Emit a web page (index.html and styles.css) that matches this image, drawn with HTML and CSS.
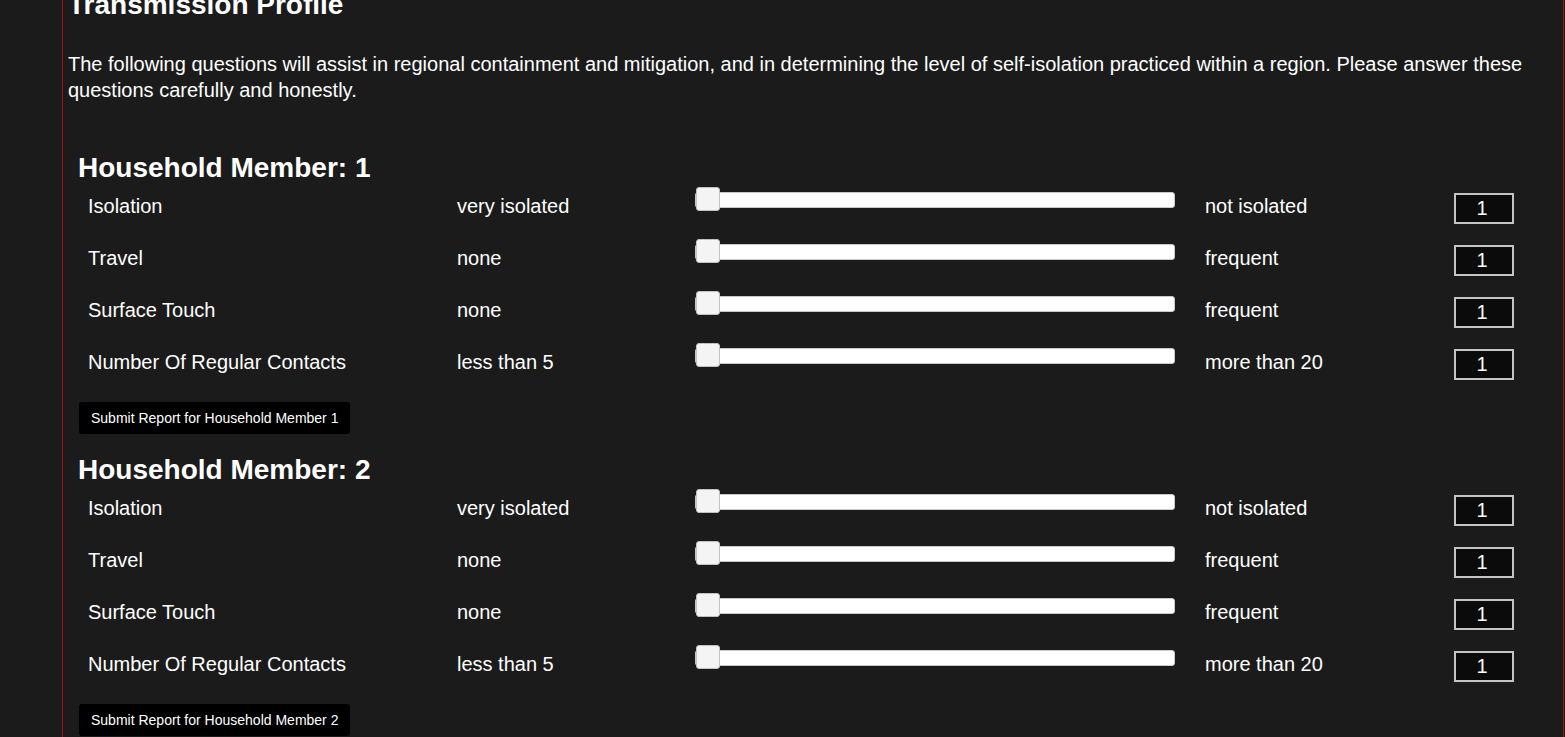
FILE: index.html
```html
<!DOCTYPE html>
<html lang="en">
<head>
<meta charset="utf-8">
<title>Transmission Profile</title>
<link rel="stylesheet" href="styles.css">
</head>
<body>
<main class="page">
  <h1 class="title">Transmission Profile</h1>
  <p class="intro">The following questions will assist in regional containment and mitigation, and in determining the level of self-isolation practiced within a region. Please answer these questions carefully and honestly.</p>

  <section class="member">
    <h2 class="member-title">Household Member: 1</h2>
    <div class="q-row">
      <span class="q-label">Isolation</span>
      <span class="q-min">very isolated</span>
      <input class="q-slider" type="range" min="1" max="10" value="1">
      <span class="q-max">not isolated</span>
      <input class="q-value" type="text" value="1">
    </div>
    <div class="q-row">
      <span class="q-label">Travel</span>
      <span class="q-min">none</span>
      <input class="q-slider" type="range" min="1" max="10" value="1">
      <span class="q-max">frequent</span>
      <input class="q-value" type="text" value="1">
    </div>
    <div class="q-row">
      <span class="q-label">Surface Touch</span>
      <span class="q-min">none</span>
      <input class="q-slider" type="range" min="1" max="10" value="1">
      <span class="q-max">frequent</span>
      <input class="q-value" type="text" value="1">
    </div>
    <div class="q-row">
      <span class="q-label">Number Of Regular Contacts</span>
      <span class="q-min">less than 5</span>
      <input class="q-slider" type="range" min="1" max="10" value="1">
      <span class="q-max">more than 20</span>
      <input class="q-value" type="text" value="1">
    </div>
    <button class="submit" type="button">Submit Report for Household Member 1</button>
  </section>

  <section class="member">
    <h2 class="member-title">Household Member: 2</h2>
    <div class="q-row">
      <span class="q-label">Isolation</span>
      <span class="q-min">very isolated</span>
      <input class="q-slider" type="range" min="1" max="10" value="1">
      <span class="q-max">not isolated</span>
      <input class="q-value" type="text" value="1">
    </div>
    <div class="q-row">
      <span class="q-label">Travel</span>
      <span class="q-min">none</span>
      <input class="q-slider" type="range" min="1" max="10" value="1">
      <span class="q-max">frequent</span>
      <input class="q-value" type="text" value="1">
    </div>
    <div class="q-row">
      <span class="q-label">Surface Touch</span>
      <span class="q-min">none</span>
      <input class="q-slider" type="range" min="1" max="10" value="1">
      <span class="q-max">frequent</span>
      <input class="q-value" type="text" value="1">
    </div>
    <div class="q-row">
      <span class="q-label">Number Of Regular Contacts</span>
      <span class="q-min">less than 5</span>
      <input class="q-slider" type="range" min="1" max="10" value="1">
      <span class="q-max">more than 20</span>
      <input class="q-value" type="text" value="1">
    </div>
    <button class="submit" type="button">Submit Report for Household Member 2</button>
  </section>
</main>
</body>
</html>
```

FILE: styles.css
```css
html {
  overflow: hidden;
}

body {
  margin: 0;
  background: #1b1b1b;
  color: #ffffff;
  font-family: "Liberation Sans", Arial, sans-serif;
}

.page {
  margin-left: 62px;
  width: 1495px;
  min-height: 1200px;
  padding-left: 5px;
  border-left: 1px solid #9b1212;
  border-right: 1px solid #9b1212;
}

.title {
  margin: -11px 0 0 0;
  font-size: 28px;
  line-height: 32px;
  font-weight: bold;
}

.intro {
  margin: 30px 0 0 0;
  font-size: 20px;
  line-height: 26px;
}

.member {
  padding-left: 10px;
  margin-top: 50px;
}

.member + .member {
  margin-top: 21px;
}

.member-title {
  margin: 0;
  font-size: 28px;
  line-height: 29px;
  font-weight: bold;
}

.q-row {
  display: grid;
  grid-template-columns: 369px 238px 480px 30px 249px 60px;
  height: 52px;
  align-items: start;
  padding-left: 10px;
  font-size: 20px;
}

.q-label,
.q-min,
.q-max {
  line-height: 23px;
  margin-top: 13px;
}

.q-max {
  grid-column: 5;
}

.q-slider {
  -webkit-appearance: none;
  appearance: none;
  width: 480px;
  height: 24px;
  margin: 6px 0 0 0;
  padding: 0;
  background: transparent;
}

.q-slider::-webkit-slider-runnable-track {
  height: 16px;
  box-sizing: border-box;
  background: #ffffff;
  border: 1px solid #c9c9c9;
  border-radius: 3px;
}

.q-slider::-webkit-slider-thumb {
  -webkit-appearance: none;
  appearance: none;
  width: 24px;
  height: 24px;
  margin-top: -6px;
  box-sizing: border-box;
  background: #f4f4f4;
  border: 1px solid #c2c2c2;
  border-radius: 3px;
}

.q-value {
  width: 60px;
  height: 31px;
  box-sizing: border-box;
  margin: 11px 0 0 0;
  padding: 0 4px 0 0;
  background: #0b0b0b;
  color: #ffffff;
  border: 2px solid #c4c4c4;
  font-family: "Liberation Sans", Arial, sans-serif;
  font-size: 20px;
  text-align: center;
}

.submit {
  display: block;
  margin: 12px 0 0 1px;
  height: 32px;
  padding: 0 12px;
  background: #000000;
  color: #ffffff;
  border: none;
  border-radius: 3px;
  font-family: "Liberation Sans", Arial, sans-serif;
  font-size: 14px;
}
```
